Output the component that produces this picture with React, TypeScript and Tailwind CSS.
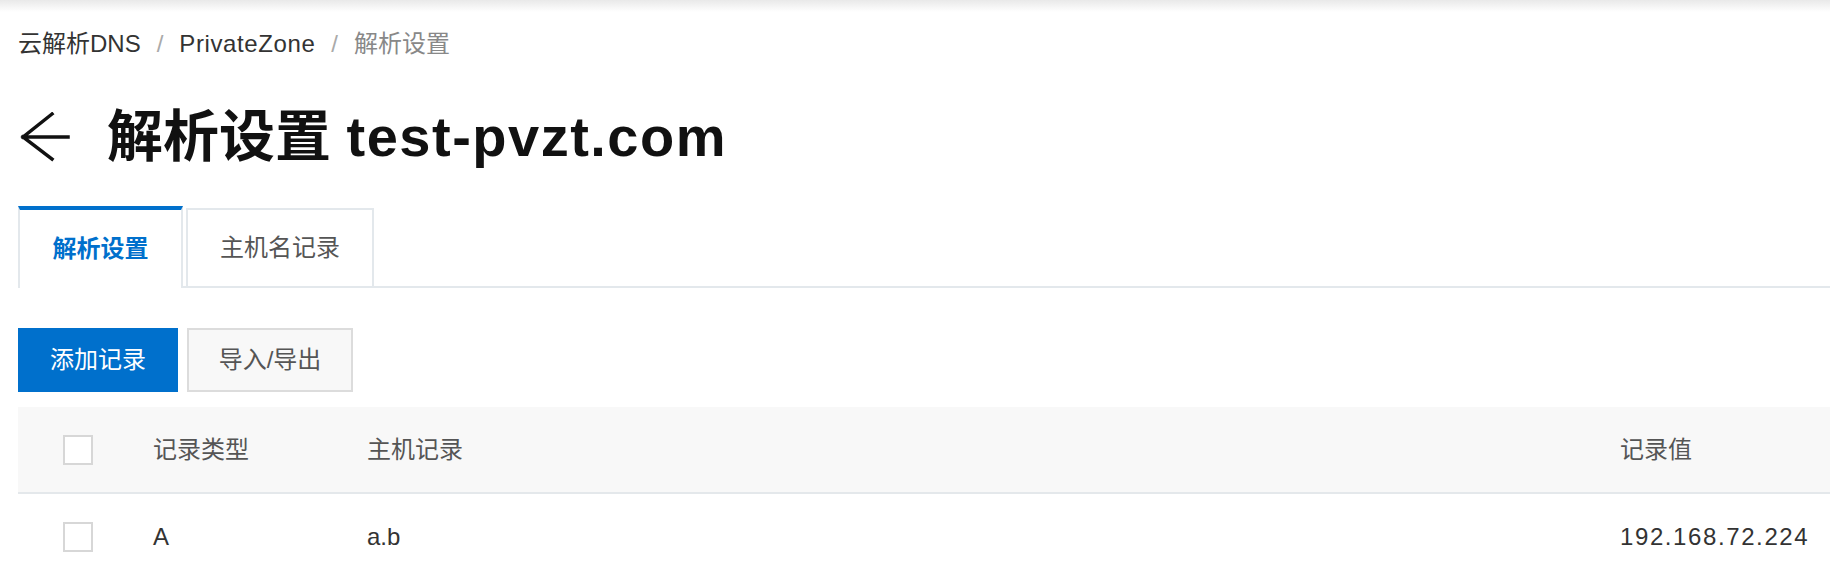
import React from 'react';

const rows = [{ type: 'A', host: 'a.b', value: '192.168.72.224' }];

const Checkbox: React.FC = () => (
  <span className="block h-[30px] w-[30px] border-2 border-[#d7d7d7] bg-white" />
);

const BackArrow: React.FC = () => (
  <svg width="50" height="50" viewBox="0 0 50 50" fill="none" className="shrink-0">
    <path d="M3 25H48M3 25L32 2M3 25L32 47" stroke="#111" strokeWidth="3.5" strokeLinecap="square" />
  </svg>
);

export default function App() {
  return (
    <div className="min-h-[566px] w-full overflow-hidden bg-white font-['Liberation_Sans','Noto_Sans_CJK_SC',sans-serif]">
      {/* top shadow of the console bar */}
      <div className="h-[12px] bg-gradient-to-b from-[#e9e9e9] to-white" />

      <div className="pl-[18px]">
        {/* breadcrumb */}
        <div className="flex items-center pt-[18px] text-[24px] leading-[28px]">
          <span className="text-[#333]">云解析DNS</span>
          <span className="mx-[16px] text-[#aaa]">/</span>
          <span className="tracking-[0.6px] text-[#333]">PrivateZone</span>
          <span className="mx-[16px] text-[#aaa]">/</span>
          <span className="text-[#888]">解析设置</span>
        </div>

        {/* title */}
        <div className="mt-[47px] flex h-[64px] items-center">
          <span className="ml-[2px]">
            <BackArrow />
          </span>
          <h1 className="ml-[37px] text-[56px] font-bold leading-[64px] text-[#111]">
            解析设置 <span className="tracking-[1.5px]">test-pvzt.com</span>
          </h1>
        </div>

        {/* tabs */}
        <div className="mt-[37px] flex items-end border-b-2 border-[#e3e8ec]">
          <div className="-mb-[2px] flex h-[82px] w-[165px] items-center justify-center border-x-2 border-t-4 border-x-[#e3e8ec] border-t-[#0070cc] bg-white text-[24px] font-semibold text-[#0070cc]">
            解析设置
          </div>
          <div className="ml-[3px] flex h-[78px] w-[188px] items-center justify-center border-x-2 border-t-2 border-[#e3e8ec] bg-white text-[24px] text-[#555]">
            主机名记录
          </div>
        </div>

        {/* actions */}
        <div className="mt-[40px] flex gap-[9px]">
          <button className="h-[64px] w-[160px] bg-[#0070cc] text-[24px] text-white">添加记录</button>
          <button className="h-[64px] w-[166px] border-2 border-[#dcdcdc] bg-[#f8f8f8] text-[24px] text-[#555]">导入/导出</button>
        </div>

        {/* table */}
        <div className="mt-[15px]">
          <div className="grid h-[87px] grid-cols-[135px_214px_1253px_1fr] items-center border-b-2 border-[#e4e8eb] bg-[#f8f8f8] text-[24px] text-[#555]">
            <div className="pl-[45px]">
              <Checkbox />
            </div>
            <div>记录类型</div>
            <div>主机记录</div>
            <div>记录值</div>
          </div>
          {rows.map((r) => (
            <div
              key={r.value}
              className="grid h-[85px] grid-cols-[135px_214px_1253px_1fr] items-center text-[24px] text-[#333]"
            >
              <div className="pl-[45px]">
                <Checkbox />
              </div>
              <div>{r.type}</div>
              <div>{r.host}</div>
              <div className="tracking-[1.6px]">{r.value}</div>
            </div>
          ))}
        </div>
      </div>
    </div>
  );
}
